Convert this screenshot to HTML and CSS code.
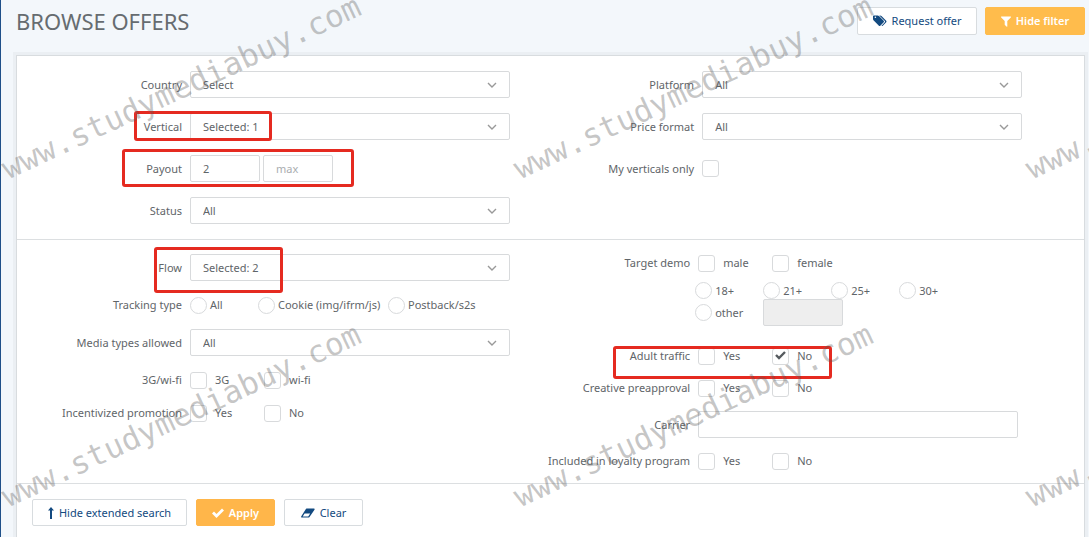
FILE: index.html
```html
<!DOCTYPE html>
<html lang="en">
<head>
    <meta charset="UTF-8">
    <meta name="viewport" content="width=device-width, initial-scale=1.0">
    <title>Browse Offers</title>
    <link rel="stylesheet" href="styles.css">
</head>
<body>

    <header class="page-header">
        <h1>BROWSE OFFERS</h1>
        <div class="header-buttons">
            <button type="button" class="btn btn-request">
                <svg class="icon" width="14" height="12" viewBox="0 0 14 12"><path fill="currentColor" d="M0 1.2Q0 .5.8.5H4.600Q5.400.5 6 1.100L10.700 5.800Q11.300 6.500 10.700 7.200L7.300 10.700Q6.600 11.300 5.900 10.700L1 5.800Q0 4.900 0 4ZM2.400 1.500A.8.800 0 1 0 2.400 3.100A.8.800 0 1 0 2.400 1.500ZM6.300.5H7.200Q7.900.5 8.500 1.100L13.200 5.800Q13.900 6.500 13.200 7.200L9.800 10.700Q9.200 11.300 8.400 10.900L11.800 7.300Q12.400 6.500 11.800 5.900Z"/></svg>
                Request offer
            </button>
            <button type="button" class="btn btn-primary btn-hide">
                <svg class="icon" width="10" height="11" viewBox="0 0 10 11"><path fill="currentColor" d="M.3.500H9.700Q10.200.9 9.800 1.400L6.300 5V10.400Q6 10.900 5.500 10.600L3.900 9.100Q3.700 8.900 3.700 8.600V5L.2 1.400Q-.2.900.3.500Z"/></svg>
                Hide filter
            </button>
        </div>
    </header>

    <form class="filter">

        <!-- Basic search -->
        <div class="filter-section">
            <div class="column">
                <div class="field">
                    <label class="field-label" for="country">Country</label>
                    <select id="country"><option>Select</option></select>
                </div>
                <div class="field">
                    <label class="field-label" for="vertical">Vertical</label>
                    <select id="vertical"><option>Selected: 1</option></select>
                    <span class="highlight highlight-vertical"></span>
                </div>
                <div class="field">
                    <label class="field-label" for="payoutMin">Payout</label>
                    <div class="range">
                        <input type="text" id="payoutMin" value="2">
                        <input type="text" id="payoutMax" placeholder="max" aria-label="Payout max">
                    </div>
                    <span class="highlight highlight-payout"></span>
                </div>
                <div class="field">
                    <label class="field-label" for="status">Status</label>
                    <select id="status"><option>All</option></select>
                </div>
            </div>
            <div class="column">
                <div class="field">
                    <label class="field-label" for="platform">Platform</label>
                    <select id="platform"><option>All</option></select>
                </div>
                <div class="field">
                    <label class="field-label" for="priceFormat">Price format</label>
                    <select id="priceFormat"><option>All</option></select>
                </div>
                <div class="field field-tall">
                    <label class="field-label" for="myVerticals">My verticals only</label>
                    <input type="checkbox" id="myVerticals">
                </div>
            </div>
        </div>

        <!-- Extended search -->
        <div class="filter-section extended">
            <div class="column">
                <div class="field">
                    <label class="field-label" for="flow">Flow</label>
                    <select id="flow"><option>Selected: 2</option></select>
                    <span class="highlight highlight-flow"></span>
                </div>
                <div class="field">
                    <span class="field-label">Tracking type</span>
                    <div class="radios tracking">
                        <label><input type="radio" name="tracking">All</label>
                        <label><input type="radio" name="tracking">Cookie (img/ifrm/js)</label>
                        <label><input type="radio" name="tracking">Postback/s2s</label>
                    </div>
                </div>
                <div class="field">
                    <label class="field-label" for="media">Media types allowed</label>
                    <select id="media"><option>All</option></select>
                </div>
                <div class="field">
                    <span class="field-label">3G/wi-fi</span>
                    <div class="checks">
                        <label><input type="checkbox">3G</label>
                        <label><input type="checkbox">wi-fi</label>
                    </div>
                </div>
                <div class="field">
                    <span class="field-label">Incentivized promotion</span>
                    <div class="checks">
                        <label><input type="checkbox">Yes</label>
                        <label><input type="checkbox">No</label>
                    </div>
                </div>
            </div>
            <div class="column column-right">
                <div class="field field-demo">
                    <span class="field-label">Target demo</span>
                    <div class="demo">
                        <div class="checks">
                            <label><input type="checkbox">male</label>
                            <label><input type="checkbox">female</label>
                        </div>
                        <div class="radios ages">
                            <label><input type="radio" name="age">18+</label>
                            <label><input type="radio" name="age">21+</label>
                            <label><input type="radio" name="age">25+</label>
                            <label><input type="radio" name="age">30+</label>
                            <label><input type="radio" name="age">other</label>
                            <input type="text" class="age-other" aria-label="Other age" disabled>
                        </div>
                    </div>
                </div>
                <div class="field">
                    <span class="field-label">Adult traffic</span>
                    <div class="checks">
                        <label><input type="checkbox">Yes</label>
                        <label><input type="checkbox" checked>No</label>
                    </div>
                    <span class="highlight highlight-adult"></span>
                </div>
                <div class="field">
                    <span class="field-label">Creative preapproval</span>
                    <div class="checks">
                        <label><input type="checkbox">Yes</label>
                        <label><input type="checkbox">No</label>
                    </div>
                </div>
                <div class="field">
                    <label class="field-label" for="carrier">Carrier</label>
                    <input type="text" id="carrier">
                </div>
                <div class="field">
                    <span class="field-label">Included in loyalty program</span>
                    <div class="checks">
                        <label><input type="checkbox">Yes</label>
                        <label><input type="checkbox">No</label>
                    </div>
                </div>
            </div>
        </div>

        <div class="filter-actions">
            <button type="button" class="btn btn-extended">
                <svg class="icon" width="6" height="12" viewBox="0 0 6 12"><path fill="currentColor" d="M3 0L6 3.500H4V12H2V3.500H0Z"/></svg>
                Hide extended search
            </button>
            <button type="submit" class="btn btn-primary btn-apply">
                <svg class="icon" width="12" height="10" viewBox="0 0 12 10"><path fill="none" stroke="currentColor" stroke-width="2.800" d="M1 4.500L4.500 8L11 1.500"/></svg>
                Apply
            </button>
            <button type="reset" class="btn btn-clear">
                <svg class="icon" width="14" height="10" viewBox="0 0 14 10"><path fill="currentColor" fill-rule="evenodd" d="M5.500.5H13Q14 .7 13.500 1.700L8.500 9Q8 9.500 7.500 9.500H.8Q-.2 9.300.3 8.300L4.900 1Q5.100.5 5.500.5ZM1.700 8.400H7.200L9.200 5.600H3.600Z"/></svg>
                Clear
            </button>
        </div>
    </form>

    <div class="watermarks" aria-hidden="true">
        <span>www.studymediabuy.com</span>
        <span>www.studymediabuy.com</span>
        <span>www.studymediabuy.com</span>
        <span>www.studymediabuy.com</span>
        <span>www.studymediabuy.com</span>
        <span>www.studymediabuy.com</span>
    </div>

</body>
</html>
```
FILE: styles.css
```css
* {
    box-sizing: border-box;
}

body {
    position: relative;
    display: flex;
    flex-direction: column;
    min-height: 100vh;
    margin: 0;
    padding: 0 4px 0 15px;
    border-left: 1px solid #1f5089;
    background-color: #f3f7fb;
    color: #5f6569;
    font-family: "Noto Sans", "Open Sans", sans-serif;
    font-size: 11px;
    line-height: 18px;
}

button,
input,
select {
    margin: 0;
    color: inherit;
    font: inherit;
}

/* Header */
.page-header {
    display: flex;
    justify-content: space-between;
    align-items: center;
    padding: 7px 0 20px;
}

h1 {
    margin: 0;
    color: #666c70;
    font-size: 22px;
    font-weight: normal;
    line-height: 28px;
}

.header-buttons {
    display: flex;
    gap: 8px;
}

/* Buttons */
.btn {
    display: flex;
    align-items: center;
    justify-content: center;
    gap: 5px;
    height: 27px;
    padding: 0 16px;
    border: 1px solid #d8dcdf;
    border-radius: 2px;
    background-color: #fff;
    color: #134a80;
    white-space: nowrap;
}

.btn-primary {
    border-color: #ffb64a;
    background-color: #ffb64a;
    color: #fff;
    font-weight: 600;
}

.header-buttons .btn {
    height: 28px;
}

.btn-request {
    width: 120px;
}

.btn-hide {
    width: 100px;
    border-color: #ffbc4c;
    background-color: #ffbc4c;
}

.btn-extended {
    width: 155px;
}

.btn-apply,
.btn-clear {
    width: 79px;
}

.icon {
    flex: none;
}

/* Filter panel */
.filter {
    flex: 1;
    border: 1px solid #d8dcdf;
    border-bottom: 0;
    background-color: #fff;
    box-shadow: 0 0 0 3px #ebeff3;
}

.filter-section {
    display: grid;
    grid-template-columns: 48% 52%;
    padding: 15px 0;
    border-bottom: 1px solid #dcdfe1;
}

.extended {
    padding: 14px 0 13px;
}

.column {
    display: flex;
    flex-direction: column;
    gap: 15px;
}

.column-right {
    gap: 14px;
}

.field {
    position: relative;
    display: flex;
    align-items: center;
    gap: 8px;
}

.field-tall {
    height: 27px;
}

.field-label {
    flex: none;
    width: 165px;
    text-align: right;
    white-space: nowrap;
}

.column-right .field-label {
    width: 161px;
}

select,
input[type="text"] {
    width: 320px;
    height: 27px;
    padding: 0 12px;
    border: 1px solid #d8dadc;
    border-radius: 2px;
    background-color: #fff;
    appearance: none;
}

select {
    background-image: url("data:image/svg+xml,%3Csvg xmlns='http://www.w3.org/2000/svg' width='10' height='6'%3E%3Cpath d='M1 1l4 4 4-4' fill='none' stroke='%23999' stroke-width='1.4'/%3E%3C/svg%3E");
    background-repeat: no-repeat;
    background-position: right 12px center;
}

input::placeholder {
    color: #aaadb0;
}

.range {
    display: flex;
    gap: 3px;
}

.range input[type="text"] {
    width: 70px;
}

/* Checkboxes and radios */
input[type="checkbox"],
input[type="radio"] {
    flex: none;
    width: 17px;
    height: 17px;
    border: 1px solid #d8dadc;
    border-radius: 3px;
    background-color: #fff;
    appearance: none;
}

input[type="radio"] {
    border-radius: 50%;
}

input[type="checkbox"]:checked {
    background-image: url("data:image/svg+xml,%3Csvg xmlns='http://www.w3.org/2000/svg' width='11' height='9'%3E%3Cpath d='M1 4l3 3 6-6' fill='none' stroke='%23565b5f' stroke-width='2.4'/%3E%3C/svg%3E");
    background-repeat: no-repeat;
    background-position: center 2px;
}

.checks,
.radios {
    display: flex;
}

.checks label,
.radios label {
    display: flex;
    align-items: center;
    height: 18px;
    white-space: nowrap;
}

.checks label {
    gap: 8px;
    width: 74px;
}

.radios label {
    gap: 3px;
}

.tracking label:nth-child(1) {
    width: 68px;
}

.tracking label:nth-child(2) {
    width: 130px;
}

.field-demo {
    align-items: flex-start;
    padding-bottom: 7px;
}

.demo {
    display: flex;
    flex-direction: column;
    gap: 10px;
}

.ages {
    display: grid;
    grid-template-columns: repeat(4, 68px);
    grid-template-rows: 17px 27px;
    margin-left: -3px;
}

.ages label {
    align-self: center;
}

.ages .age-other {
    width: 80px;
    background-color: #eee;
}

/* Footer buttons */
.filter-actions {
    display: flex;
    gap: 9px;
    padding: 15px 15px 11px;
}

/* Red frames over the important fields */
.highlight {
    position: absolute;
    border: 3px solid #e52a20;
    border-radius: 3px;
    pointer-events: none;
}

.highlight-vertical {
    top: -2px;
    left: 117px;
    width: 138px;
    height: 30px;
}

.highlight-payout {
    top: -6px;
    left: 105px;
    width: 232px;
    height: 38px;
}

.highlight-flow {
    top: -7px;
    left: 137px;
    width: 129px;
    height: 46px;
}

.highlight-adult {
    top: -1px;
    left: 84px;
    width: 219px;
    height: 33px;
}

/* Watermark pattern */
.watermarks {
    position: absolute;
    inset: 0;
    display: grid;
    grid-template-columns: repeat(3, 512px);
    grid-template-rows: repeat(2, 328px);
    justify-items: start;
    align-items: start;
    overflow: hidden;
    pointer-events: none;
}

.watermarks span {
    margin: 70px 0 0 -16px;
    color: rgba(90, 90, 90, 0.35);
    font-family: "DejaVu Sans Mono", monospace;
    font-size: 31px;
    line-height: 34px;
    transform: rotate(-25deg);
}
```
